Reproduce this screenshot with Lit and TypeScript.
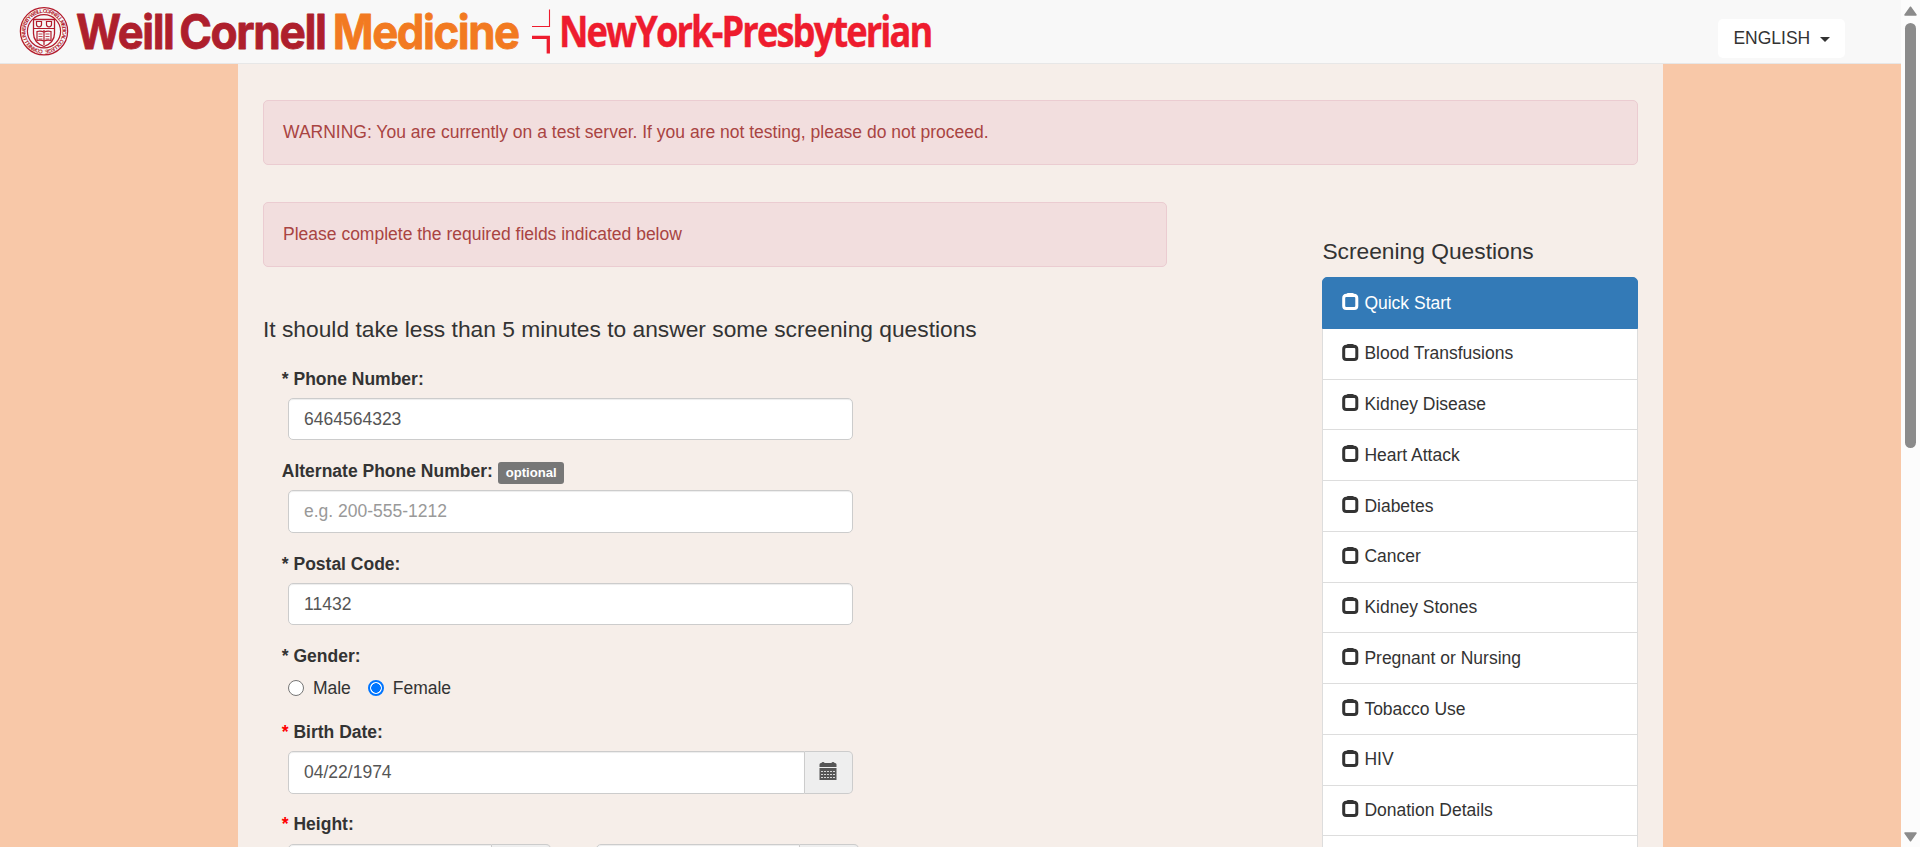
import { LitElement, html, svg, css } from "lit";
import { customElement, property } from "lit/decorators.js";

const SECTIONS = [
  "Quick Start",
  "Blood Transfusions",
  "Kidney Disease",
  "Heart Attack",
  "Diabetes",
  "Cancer",
  "Kidney Stones",
  "Pregnant or Nursing",
  "Tobacco Use",
  "HIV",
  "Donation Details",
];

const calendarIcon = svg`
  <path d="M.5 5V2.500Q.5 1 2 1h.5q0-1 1.500-1t1.500 1h7q0-1 1.500-1t1.500 1h.5q1.500 0 1.500 1.500V5z" />
  <path d="M.5 6h17v12H.5z" />
  <path d="M2 9.500h14M2 12.500h14M2 15.500h14" stroke="#d5d5d5" stroke-width="1" stroke-dasharray="2 1" />`;

@customElement("brand-logos")
export class BrandLogos extends LitElement {
  static styles = css`
    :host { display: block; }
    svg { display: block; }
    .sans {
      font-family: Inter, "Liberation Sans", sans-serif; font-weight: 700; font-size: 47.5px; letter-spacing: -1.5px;
      stroke-width: 0.8px; stroke-linejoin: round;
    }
    .carnelian { fill: #ae1f2d; stroke: #ae1f2d; }
    .orange { fill: #f27a21; stroke: #f27a21; }
    .humanist {
      font-family: "Open Sans", "Noto Sans", sans-serif; font-weight: 700; font-size: 42.5px; letter-spacing: -2.2px;
      fill: #ee1c2e; stroke: #ee1c2e; stroke-width: 0.4px;
    }
    .ring { font-family: "Liberation Sans", sans-serif; font-weight: 700; font-size: 5.4px; }
  `;
  render() {
    return html`
      <svg width="940" height="63" viewBox="0 0 940 63" aria-label="Weill Cornell Medicine and NewYork-Presbyterian">
        <g stroke="#b31b2c" fill="none">
          <circle cx="44" cy="31.300" r="23.600" stroke-width="1.300" />
          <circle cx="44" cy="31.300" r="16.600" stroke-width="1.200" />
          <path d="M33.500 19.500h21v14q0 9-10.500 13-10.500-4-10.500-13z" stroke-width="1.300" />
          <path d="M33.500 28.500h21M44 30v15" stroke-width="1.200" />
          <path d="M36.500 21.500h5v3q0 2-2.500 2.500-2.500-.5-2.500-2.500zM46.500 21.500h5v3q0 2-2.500 2.500-2.500-.5-2.500-2.500z" stroke-width="1.200" />
          <path d="M37 31.500q3.500-1 7 .5 3.500-1.500 7-.5v9q-3.500-1-7 .5-3.500-1.500-7-.5z" stroke-width="1.200" />
          <path d="M38.500 34h4M45.500 34h4M38.500 36.500h4M45.500 36.500h4M38.500 39h4M45.500 39h4" stroke-width=".8" />
        </g>
        <defs>
          <path id="ringPath" d="M44 49.800a18.500 18.500 0 1 1 .01 0" />
        </defs>
        <text class="ring" fill="#b31b2c">
          <textPath href="#ringPath" startOffset="1" textLength="114">CORNELL UNIVERSITY WEILL CORNELL MEDICAL COLLEGE</textPath>
        </text>
        <text class="sans carnelian" x="76" y="49" textLength="97.500" lengthAdjust="spacingAndGlyphs">Weill</text>
        <text class="sans carnelian" x="179.200" y="49" textLength="146.500" lengthAdjust="spacingAndGlyphs">Cornell</text>
        <text class="sans orange" x="332.800" y="49" textLength="186" lengthAdjust="spacingAndGlyphs">Medicine</text>
        <path d="M532 26.500h17.500V9.500" fill="none" stroke="#ee1c2e" stroke-width="1.100" />
        <path d="M532 37.300h16.300V53.500" fill="none" stroke="#ee1c2e" stroke-width="3.300" />
        <text class="humanist" x="559" y="46.500" textLength="372.500" lengthAdjust="spacingAndGlyphs">NewYork-Presbyterian</text>
      </svg>`;
  }
}

@customElement("form-field")
export class FormField extends LitElement {
  @property() label = "";
  @property() mark = "";
  @property() badge = "";
  static styles = css`
    :host { display: block; margin-bottom: 18.75px; }
    .label { display: block; height: 25px; line-height: 25px; margin-bottom: 6.25px; font-weight: 700; white-space: nowrap; }
    .red { color: #f00; }
    .badge {
      display: inline-block; box-sizing: border-box; height: 22px; padding: 0 7.5px; border-radius: 3px;
      background: #777; color: #fff; font-size: 13.125px; line-height: 21px; vertical-align: top; margin: 3px 0 0 0.5px;
    }
    .body { display: flex; padding-left: 6.25px; }
  `;
  render() {
    return html`
      <span class="label">${this.mark
        ? html`<span class=${this.mark}>*</span> `
        : ""}${this.label}${this.badge ? html` <span class="badge">${this.badge}</span>` : ""}</span>
      <div class="body"><slot></slot></div>`;
  }
}

@customElement("app-root")
export class AppRoot extends LitElement {
  static styles = css`
    :host {
      display: grid; grid-template-columns: 1fr 19px; height: 847px; overflow: hidden;
      font-family: "Liberation Sans", Arial, sans-serif; font-size: 17.5px; line-height: 25px; color: #333;
      background: #f8c8a8;
    }
    .page { display: flex; flex-direction: column; min-width: 0; height: 847px; overflow: hidden; }
    .navbar {
      flex: none; box-sizing: border-box; height: 64px; display: flex; justify-content: space-between;
      background: #f8f8f8; border-bottom: 1px solid #e7e7e7; padding-right: 56px;
    }
    .lang {
      box-sizing: border-box; width: 127px; height: 39px; margin-top: 19px; padding: 0 15px 0 15.4px;
      display: flex; align-items: center; justify-content: space-between;
      border: 0; border-radius: 5px; background: #fff; color: #333; font: inherit; line-height: 37px;
    }
    .caret { border-top: 5px solid #333; border-left: 5px solid transparent; border-right: 5px solid transparent; margin-top: 2px; }
    .content {
      box-sizing: border-box; width: 75%; height: 783px; margin: 0 auto; padding: 36px 25px 0 25.4px;
      background: #f6eee9; overflow: hidden; flex: none;
    }
    .alert {
      box-sizing: border-box; height: 65px; padding: 18.75px 19px; border: 1px solid #ebccd1; border-radius: 5px;
      background: #f2dede; color: #a94442; line-height: 25px;
    }
    .columns { display: flex; justify-content: space-between; margin-top: 37px; }
    .main { width: 904px; }
    .title { margin: 50px 0 24.75px; font-size: 22.77px; font-weight: 400; line-height: 24.75px; white-space: nowrap; }
    .form { padding-left: 18.75px; }
    .input {
      box-sizing: border-box; width: 565px; height: 42.5px; padding: 0 15px; border: 1px solid #ccc; border-radius: 5px;
      background: #fff; color: #555; font: inherit; box-shadow: inset 0 1px 1px rgba(0, 0, 0, 0.075); outline: 0;
    }
    .input::placeholder { color: #999; opacity: 1; }
    .group { display: flex; }
    .group .input { border-top-right-radius: 0; border-bottom-right-radius: 0; }
    .group .date { width: 517px; height: 42.9px; }
    .group .size { width: 204px; }
    .addon {
      box-sizing: border-box; height: 42.9px; width: 48px; display: flex; align-items: center; justify-content: center;
      border: 1px solid #ccc; border-left: 0; border-radius: 0 5px 5px 0; background: #eee; color: #555;
    }
    .glyph { width: 18px; height: 18px; margin: -2px 1px 0 0; }
    .unit { width: 59px; }
    .second { margin-left: 45px; }
    .radios { display: flex; height: 25.5px; align-items: flex-start; }
    .choice { display: flex; margin-right: 17px; padding-top: 0.35px; }
    .radio {
      box-sizing: border-box; width: 16px; height: 16px; margin: 4.9px 8.9px 0 0; border: 1px solid #767676;
      border-radius: 50%; background: #fff;
    }
    .checked { border: 2px solid #0075ff; background: radial-gradient(circle, #0075ff 4.5px, #fff 5px); }
    .side { width: 316px; padding-top: 37.2px; }
    .side-title { margin: 0 0 13.1px; font-size: 22.77px; font-weight: 400; line-height: 24.75px; }
    .item {
      box-sizing: border-box; height: 52px; margin-bottom: -1.25px; padding: 12.5px 19px; display: flex;
      border: 1px solid #ddd; background: #fff; color: #333;
    }
    .item:first-child { border-radius: 5px 5px 0 0; }
    .active { position: relative; z-index: 1; background: #337ab7; border-color: #337ab7; color: #fff; }
    .box { width: 17px; height: 17px; margin: 2.4px 5px 0 0; }
    .scroll { background: #fcfcfc; display: flex; flex-direction: column; align-items: center; height: 847px; }
    .up, .down { width: 13px; height: 10px; flex: none; }
    .up { margin-top: 6px; }
    .down { margin: auto 0 5px; }
    .thumb { width: 11px; height: 425px; margin-top: 7px; border-radius: 6px; background: #8b8b8b; flex: none; }
  `;

  render() {
    return html`
      <div class="page">
        <nav class="navbar">
          <brand-logos></brand-logos>
          <button class="lang">ENGLISH <span class="caret"></span></button>
        </nav>
        <div class="content">
          <div class="alert">WARNING: You are currently on a test server. If you are not testing, please do not proceed.</div>
          <div class="columns">
            <div class="main">
              <div class="alert">Please complete the required fields indicated below</div>
              <h4 class="title">It should take less than 5 minutes to answer some screening questions</h4>
              <div class="form">
                <form-field label="Phone Number:" mark="dark"><input class="input" .value=${"6464564323"} /></form-field>
                <form-field label="Alternate Phone Number:" badge="optional"><input class="input" placeholder="e.g. 200-555-1212" /></form-field>
                <form-field label="Postal Code:" mark="dark"><input class="input" .value=${"11432"} /></form-field>
                <form-field label="Gender:" mark="dark">
                  <div class="radios">
                    <span class="choice"><span class="radio"></span>Male</span>
                    <span class="choice"><span class="radio checked"></span>Female</span>
                  </div>
                </form-field>
                <form-field label="Birth Date:" mark="red">
                  <div class="group">
                    <input class="input date" .value=${"04/22/1974"} />
                    <span class="addon"><svg class="glyph" viewBox="0 0 18 18" fill="#555">${calendarIcon}</svg></span>
                  </div>
                </form-field>
                <form-field label="Height:" mark="red">
                  <div class="group"><input class="input size" /><span class="addon unit"></span></div>
                  <div class="group second"><input class="input size" /><span class="addon unit"></span></div>
                </form-field>
              </div>
            </div>
            <aside class="side">
              <h4 class="side-title">Screening Questions</h4>
              <div>
                ${SECTIONS.map(
                  (name, i) => html`<div class="item ${i === 0 ? "active" : ""}">
                    <svg class="box" viewBox="0 0 17 17"><path fill="currentColor" fill-rule="evenodd" d="M4.500.8Q5 0 6 0h4.500q1 0 1.500.8 4.300.2 4.300 4.200v8q0 4-4 4H4.200q-4 0-4-4V5q0-4 4.300-4.200zM4.300 4Q3.200 4 3.200 5v8q0 1.100 1.100 1.100h7.900q1.100 0 1.100-1.100V5q0-1-1.100-1z" /></svg>${name}
                  </div>`
                )}
                <div class="item"></div>
              </div>
            </aside>
          </div>
        </div>
      </div>
      <div class="scroll">
        <svg class="up" viewBox="0 0 13 10"><path d="M6.500 1.200 12 9H1z" fill="#8b8b8b" stroke="#8b8b8b" stroke-width="1.500" stroke-linejoin="round" /></svg>
        <div class="thumb"></div>
        <svg class="down" viewBox="0 0 13 10"><path d="M6.500 8.800 12 1H1z" fill="#8b8b8b" stroke="#8b8b8b" stroke-width="1.500" stroke-linejoin="round" /></svg>
      </div>`;
  }
}
